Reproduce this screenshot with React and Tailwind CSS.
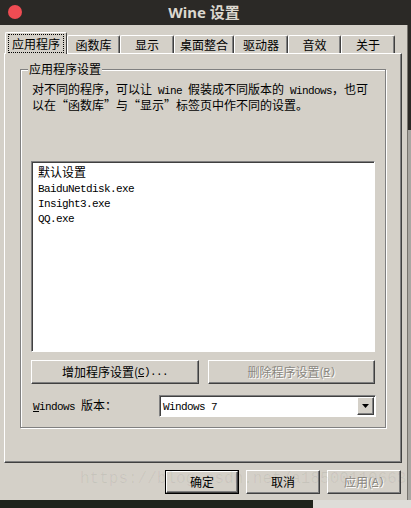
import React from "react";

const L = ({ children }) => (
  <span className="font-['Liberation_Mono',monospace] text-[11px] tracking-[-0.6px]">{children}</span>
);

const raised =
  "border border-t-white border-l-white border-r-[#404040] border-b-[#404040] shadow-[inset_-1px_-1px_0_#808080]";
const disabledText = "text-[#8a877f] [text-shadow:1px_1px_0_#ffffff]";

function Tab({ w, label, active }) {
  if (active) {
    return (
      <div
        className={`w-[${w}px] h-[22px] -mb-[1px] bg-[#d4d0c8] border-l border-t border-r border-t-white border-l-white border-r-[#404040] rounded-t-[2px] flex items-start justify-center pt-[1px] px-[2px]`}
        style={{ width: w }}
      >
        <div className="w-full h-[19px] border border-dotted border-black flex items-center justify-center leading-[14px]">
          {label}
        </div>
      </div>
    );
  }
  return (
    <div
      className="h-[18px] bg-[#d4d0c8] border-l border-t border-r border-t-white border-l-white border-r-[#404040] rounded-t-[2px] flex items-center justify-center leading-[14px] shadow-[inset_-1px_0_0_#808080]"
      style={{ width: w }}
    >
      {label}
    </div>
  );
}

function Button({ w, children, disabled, def }) {
  const inner = (
    <div
      className={`h-full w-full bg-[#d4d0c8] ${raised} flex items-center justify-center leading-[14px] ${
        disabled ? disabledText : ""
      }`}
    >
      {children}
    </div>
  );
  if (def) {
    return (
      <div className="h-[24px] border border-black" style={{ width: w }}>
        {inner}
      </div>
    );
  }
  return (
    <div className="h-[24px]" style={{ width: w }}>
      {inner}
    </div>
  );
}

export default function App() {
  return (
    <div className="w-[411px] h-[508px] flex flex-col overflow-hidden bg-[#2b2926] font-['Noto_Sans_CJK_SC',sans-serif] text-[12px] text-black">
      {/* title bar */}
      <div className="h-[25px] flex items-center shrink-0">
        <div className="w-[408px] relative flex items-center justify-center h-full">
          <div className="absolute left-[8px] top-[5px] w-[14px] h-[14px] rounded-full bg-[#ef4c53]" />
          <span className="font-['Noto_Sans',sans-serif] font-bold text-[15px] text-[#dcd8cf] leading-none -mt-[1px]">
            Wine <span className="font-['Noto_Sans_CJK_SC',sans-serif]">设置</span>
          </span>
        </div>
      </div>

      {/* body */}
      <div className="flex h-[475px] shrink-0">
        <div className="w-[408px] h-full bg-[#d4d0c8] border-r border-[#77746e] flex flex-col relative">
          {/* tabs */}
          <div className="flex items-end h-[21px] mt-[7px] ml-[5px] relative z-10">
            <Tab w={62} label="应用程序" active />
            <Tab w={53} label="函数库" />
            <Tab w={54} label="显示" />
            <Tab w={60} label="桌面整合" />
            <Tab w={54} label="驱动器" />
            <Tab w={53} label="音效" />
            <Tab w={54} label="关于" />
          </div>

          {/* panel */}
          <div className={`ml-[4px] w-[398px] h-[410px] ${raised} pl-[15px] pt-[15px]`}>
            {/* group box */}
            <div className="relative w-[366px] h-[359px] border border-[#808080] shadow-[1px_1px_0_#fff,inset_1px_1px_0_#fff] flex flex-col">
              <div className="absolute -top-[8px] left-[7px] px-[1px] bg-[#d4d0c8] leading-[14px]">应用程序设置</div>

              <div className="pl-[11px] pt-[12px] leading-[14px] h-[91px]">
                对不同的程序，可以让<L> Wine </L>假装成不同版本的<L> Windows</L>，也可
                <br />
                以在“函数库”与“显示”标签页中作不同的设置。
              </div>

              {/* list box */}
              <div className="ml-[10px] w-[344px] h-[191px] bg-white border border-[#808080] border-r-white border-b-white shadow-[inset_1px_1px_0_#404040] pt-[2px] pl-[6px] flex flex-col">
                <div className="h-[15px] leading-[15px]">默认设置</div>
                <div className="h-[15px] leading-[15px]"><L>BaiduNetdisk.exe</L></div>
                <div className="h-[15px] leading-[15px]"><L>Insight3.exe</L></div>
                <div className="h-[15px] leading-[15px]"><L>QQ.exe</L></div>
              </div>

              {/* buttons */}
              <div className="flex ml-[10px] mt-[8px] gap-[9px]">
                <Button w={168}>
                  增加程序设置(<L><span className="underline">C</span>)...</L>
                </Button>
                <Button w={167} disabled>
                  删除程序设置(<L><span className="underline">R</span>)</L>
                </Button>
              </div>

              {/* windows version */}
              <div className="flex items-center mt-[11px] ml-[12px] h-[22px]">
                <div className="leading-[14px] flex-1">
                  <L><span className="underline">W</span>indows </L>版本：
                </div>
                <div className="w-[217px] h-[22px] mr-[9px] bg-white border border-[#808080] border-r-white border-b-white shadow-[inset_1px_1px_0_#404040] flex items-center">
                  <div className="flex-1 pl-[3px] leading-[14px]"><L>Windows 7</L></div>
                  <div className={`w-[17px] h-[18px] mr-[1px] bg-[#d4d0c8] ${raised} flex items-center justify-center`}>
                    <svg width="7" height="4" viewBox="0 0 7 4">
                      <polygon points="0,0 7,0 3.5,4" fill="#000" />
                    </svg>
                  </div>
                </div>
              </div>
            </div>
          </div>

          {/* bottom buttons */}
          <div className="flex justify-end gap-[7px] mt-[7px] pr-[6px]">
            <Button w={74} def>确定</Button>
            <Button w={74}>取消</Button>
            <Button w={74} disabled>
              应用(<L><span className="underline">A</span>)</L>
            </Button>
          </div>

          {/* watermark */}
          <div className="absolute left-[80px] top-[442px] font-['Liberation_Mono',monospace] text-[16px] text-black/[0.06] whitespace-nowrap pointer-events-none">
            https://blog.csdn.net/a18500110663
          </div>
        </div>
        <div className="w-[3px] h-full flex flex-col">
          <div className="h-[105px] bg-[#2b2926]" />
          <div className="flex-1 bg-[#a9a7a2]" />
        </div>
      </div>

      {/* desktop strip */}
      <div className="h-[8px] flex shrink-0">
        <div className="w-[313px] bg-[#1f241c]" />
        <div className="flex-1 bg-[#dedcd8]" />
      </div>
    </div>
  );
}
